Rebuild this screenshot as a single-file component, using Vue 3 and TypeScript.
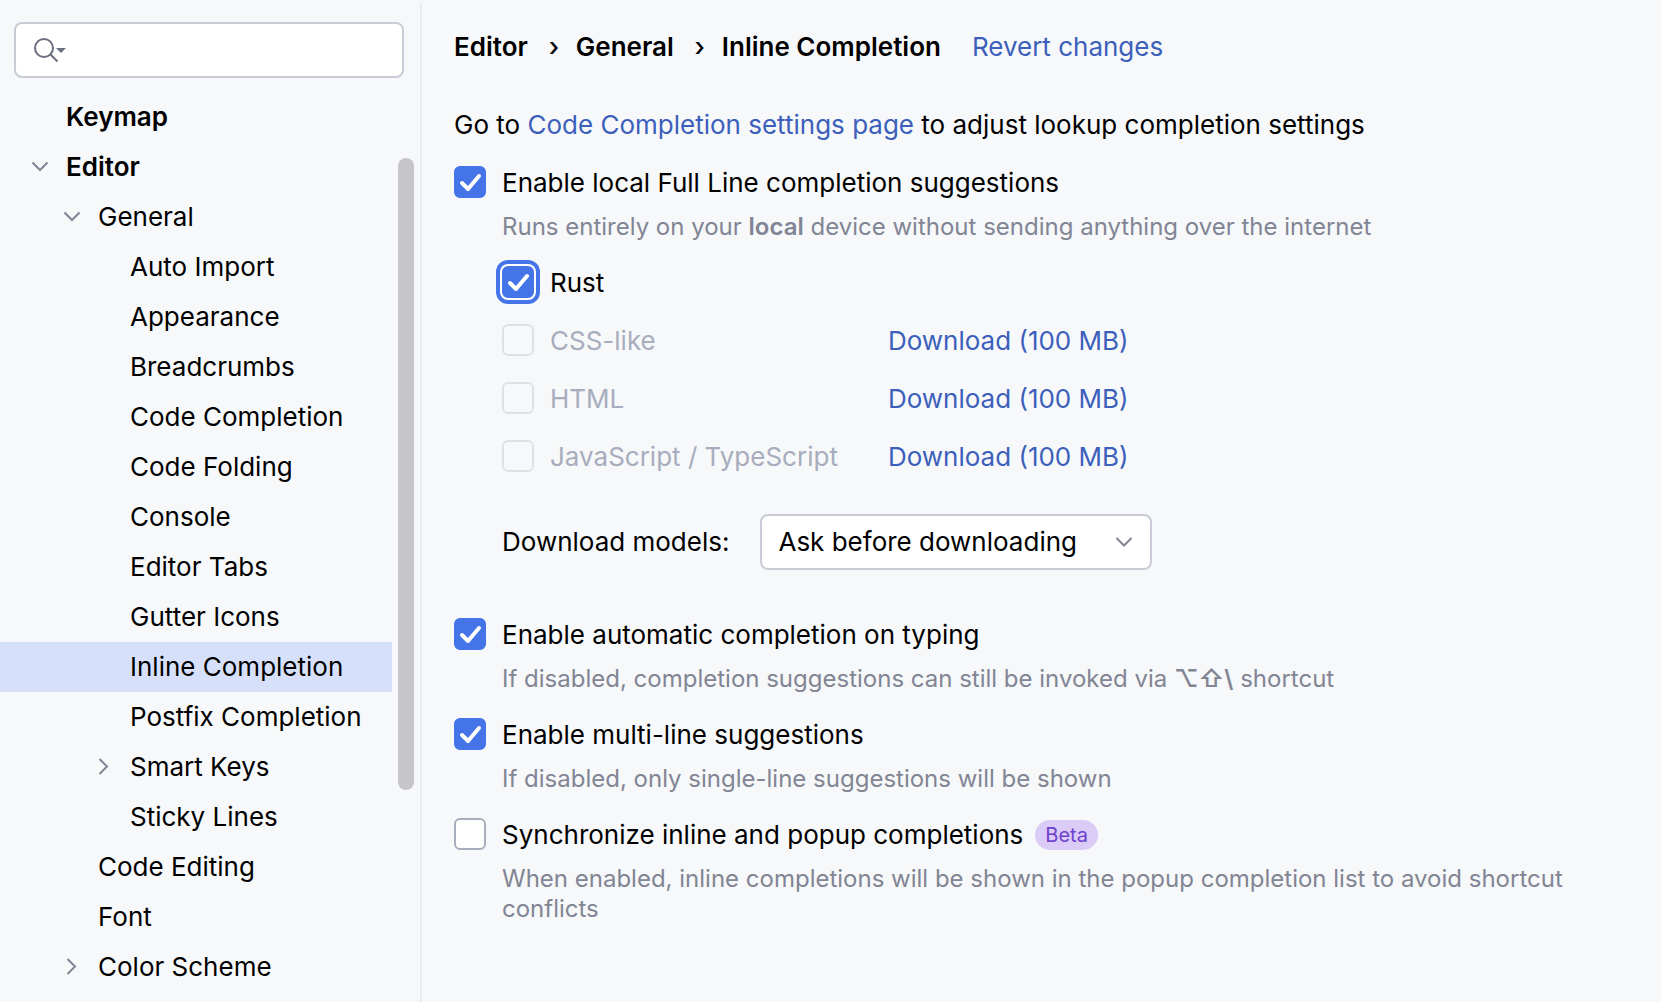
<script setup lang="ts">
import { ref, onMounted } from 'vue'

interface TreeItem {
  label: string
  level: number
  state?: 'open' | 'closed'
  bold?: boolean
}

interface Language {
  id: string
  label: string
  available: boolean
}

const tree: TreeItem[] = [
  { label: 'Keymap', level: 0, bold: true },
  { label: 'Editor', level: 0, state: 'open', bold: true },
  { label: 'General', level: 1, state: 'open' },
  { label: 'Auto Import', level: 2 },
  { label: 'Appearance', level: 2 },
  { label: 'Breadcrumbs', level: 2 },
  { label: 'Code Completion', level: 2 },
  { label: 'Code Folding', level: 2 },
  { label: 'Console', level: 2 },
  { label: 'Editor Tabs', level: 2 },
  { label: 'Gutter Icons', level: 2 },
  { label: 'Inline Completion', level: 2 },
  { label: 'Postfix Completion', level: 2 },
  { label: 'Smart Keys', level: 2, state: 'closed' },
  { label: 'Sticky Lines', level: 2 },
  { label: 'Code Editing', level: 1 },
  { label: 'Font', level: 1 },
  { label: 'Color Scheme', level: 1, state: 'closed' },
]

const languages: Language[] = [
  { id: 'rust', label: 'Rust', available: true },
  { id: 'css', label: 'CSS-like', available: false },
  { id: 'html', label: 'HTML', available: false },
  { id: 'js', label: 'JavaScript / TypeScript', available: false },
]

const selected = ref('Inline Completion')
const query = ref('')
const fullLine = ref(true)
const enabledLanguages = ref<string[]>(['rust'])
const downloadMode = ref('ask')
const automatic = ref(true)
const multiLine = ref(true)
const synchronize = ref(false)
const languageList = ref<HTMLElement | null>(null)

onMounted(() => {
  languageList.value?.querySelector('input')?.focus()
})
</script>

<template>
  <div class="settings">
    <aside class="sidebar">
      <label class="search">
        <svg class="search-icon" width="36" height="28" viewBox="0 0 36 28" aria-hidden="true">
          <circle cx="12" cy="12" r="9" fill="none" stroke="#6c707e" stroke-width="2" />
          <path d="M18.500 18.500 25.500 25.500" fill="none" stroke="#6c707e" stroke-width="2" />
          <path d="M24 12H34L29 17Z" fill="#6c707e" />
        </svg>
        <input v-model="query" type="text" aria-label="Search settings" />
      </label>
      <div class="tree-area">
        <nav class="tree" aria-label="Settings">
          <button
            v-for="item in tree"
            :key="item.label"
            type="button"
            class="tree-item"
            :class="['level-' + item.level, { bold: item.bold, selected: item.label === selected }]"
            @click="selected = item.label"
          >
            <span class="toggle">
              <svg v-if="item.state" width="20" height="20" viewBox="0 0 20 20" aria-hidden="true">
                <path
                  :d="item.state === 'open' ? 'M2.500 5.500 10 13 17.500 5.500' : 'M5.500 2 13 9.500 5.500 17'"
                  fill="none"
                  stroke="#818594"
                  stroke-width="2"
                />
              </svg>
            </span>
            {{ item.label }}
          </button>
        </nav>
        <div class="scrollbar"></div>
      </div>
    </aside>

    <main class="page">
      <header class="breadcrumbs">
        <span>Editor</span>
        <span class="separator">›</span>
        <span>General</span>
        <span class="separator">›</span>
        <span>Inline Completion</span>
        <a href="#revert" class="revert">Revert changes</a>
      </header>

      <p class="intro">
        Go to <a href="#code-completion">Code Completion settings page</a> to adjust lookup completion settings
      </p>

      <section class="option">
        <label class="check-row">
          <span class="check">
            <input v-model="fullLine" type="checkbox" />
            <svg viewBox="0 0 32 32" aria-hidden="true"><path d="M8 17 14 23 25 10" /></svg>
          </span>
          Enable local Full Line completion suggestions
        </label>
        <p class="hint">Runs entirely on your <b>local</b> device without sending anything over the internet</p>
        <div ref="languageList" class="languages">
          <template v-for="lang in languages" :key="lang.id">
            <label class="check-row" :class="{ disabled: !lang.available }">
              <span class="check">
                <input v-model="enabledLanguages" type="checkbox" :value="lang.id" :disabled="!lang.available" />
                <svg viewBox="0 0 32 32" aria-hidden="true"><path d="M8 17 14 23 25 10" /></svg>
              </span>
              {{ lang.label }}
            </label>
            <a v-if="!lang.available" :href="'#download-' + lang.id">Download (100 MB)</a>
            <span v-else></span>
          </template>
        </div>
        <div class="models">
          <label for="download-models">Download models:</label>
          <div class="combo">
            <select id="download-models" v-model="downloadMode">
              <option value="ask">Ask before downloading</option>
              <option value="auto">Download automatically</option>
            </select>
            <svg width="20" height="20" viewBox="0 0 20 20" aria-hidden="true">
              <path d="M2.500 6 10 13.500 17.500 6" fill="none" stroke="#818594" stroke-width="2" />
            </svg>
          </div>
        </div>
      </section>

      <section class="option">
        <label class="check-row">
          <span class="check">
            <input v-model="automatic" type="checkbox" />
            <svg viewBox="0 0 32 32" aria-hidden="true"><path d="M8 17 14 23 25 10" /></svg>
          </span>
          Enable automatic completion on typing
        </label>
        <p class="hint">If disabled, completion suggestions can still be invoked via <b>⌥⇧\</b> shortcut</p>
      </section>

      <section class="option">
        <label class="check-row">
          <span class="check">
            <input v-model="multiLine" type="checkbox" />
            <svg viewBox="0 0 32 32" aria-hidden="true"><path d="M8 17 14 23 25 10" /></svg>
          </span>
          Enable multi-line suggestions
        </label>
        <p class="hint">If disabled, only single-line suggestions will be shown</p>
      </section>

      <section class="option">
        <label class="check-row">
          <span class="check">
            <input v-model="synchronize" type="checkbox" />
            <svg viewBox="0 0 32 32" aria-hidden="true"><path d="M8 17 14 23 25 10" /></svg>
          </span>
          <span class="with-badge">
            Synchronize inline and popup completions
            <span class="badge">Beta</span>
          </span>
        </label>
        <p class="hint">
          When enabled, inline completions will be shown in the popup completion list to avoid shortcut conflicts
        </p>
      </section>
    </main>
  </div>
</template>

<style>
body {
  background: #f7f8fa;
}
</style>

<style scoped>
.settings {
  display: flex;
  min-height: 100vh;
  box-sizing: border-box;
  padding-top: 2px;
  background: #f7f8fa;
  color: #000;
  font: 400 26px/32px Inter, sans-serif;
}

a {
  color: #3c5fbb;
  text-decoration: none;
}

b {
  font-weight: 600;
}

.sidebar {
  flex: none;
  width: 420px;
  border-right: 2px solid #ebecf0;
}

.search {
  display: flex;
  align-items: center;
  box-sizing: border-box;
  height: 56px;
  margin: 20px 16px 14px 14px;
  padding: 0 16px;
  gap: 8px;
  border: 2px solid #c9ccd6;
  border-radius: 8px;
  background: #fff;
}

.search-icon {
  flex: none;
}

.search input {
  flex: 1;
  min-width: 0;
  border: 0;
  outline: 0;
  padding: 0;
  background: transparent;
  color: inherit;
  font: inherit;
}

.tree-area {
  display: flex;
  gap: 6px;
}

.tree {
  flex: none;
  width: 392px;
}

.tree-item {
  display: flex;
  align-items: center;
  width: 100%;
  height: 50px;
  border: 0;
  padding: 0 0 0 30px;
  background: transparent;
  color: inherit;
  font: inherit;
  text-align: left;
  white-space: nowrap;
}

.tree-item.level-1 {
  padding-left: 62px;
}

.tree-item.level-2 {
  padding-left: 94px;
}

.tree-item.bold {
  font-weight: 600;
}

.tree-item.selected {
  background: #d6e0fb;
}

.toggle {
  display: flex;
  width: 36px;
}

.scrollbar {
  width: 16px;
  height: 632px;
  margin-top: 66px;
  border-radius: 8px;
  background: #c6c6c8;
}

.page {
  flex: 1;
  min-width: 0;
  padding: 29px 32px;
}

.breadcrumbs {
  display: flex;
  font-weight: 600;
  white-space: nowrap;
}

.separator {
  box-sizing: border-box;
  width: 48px;
  padding-left: 4px;
  font-weight: 500;
  text-align: center;
}

.revert {
  margin-left: 31px;
  font-weight: 400;
}

.intro {
  margin: 46px 0 25px;
}

.option {
  margin-bottom: 24px;
}

.check-row {
  display: flex;
  align-items: flex-start;
  gap: 16px;
  height: 32px;
  line-height: 34px;
}

.check {
  display: grid;
  flex: none;
  width: 32px;
  height: 32px;
}

.check > * {
  grid-area: 1 / 1;
}

.check input {
  appearance: none;
  box-sizing: border-box;
  width: 32px;
  height: 32px;
  margin: 0;
  border: 2px solid #a8adbd;
  border-radius: 6px;
  background: #fff;
}

.check input:checked {
  border-color: #4573e8;
  background: #4573e8;
}

.check input:focus {
  outline: 0;
  box-shadow: 0 0 0 2px #fff, 0 0 0 6px #4573e8;
}

.check input:disabled {
  border-color: #dfe1e5;
  background: #f7f8fa;
}

.check svg {
  width: 32px;
  height: 32px;
  fill: none;
  stroke: #fff;
  stroke-width: 4;
  stroke-linecap: round;
  stroke-linejoin: round;
  pointer-events: none;
}

.check input:not(:checked) + svg {
  visibility: hidden;
}

.disabled {
  color: #a8adbd;
}

.hint {
  margin: 14px 0 0 48px;
  color: #818594;
  font-size: 24px;
  line-height: 30px;
}

.languages {
  display: grid;
  grid-template-columns: max-content max-content;
  grid-auto-rows: 32px;
  gap: 26px 50px;
  margin: 24px 0 42px 48px;
  line-height: 34px;
}

.models {
  display: flex;
  align-items: center;
  gap: 31px;
  margin: 0 0 48px 48px;
}

.combo {
  display: grid;
  align-items: center;
  width: 392px;
}

.combo > * {
  grid-area: 1 / 1;
}

.combo select {
  appearance: none;
  box-sizing: border-box;
  width: 100%;
  height: 56px;
  border: 2px solid #c9ccd6;
  border-radius: 8px;
  padding: 0 48px 0 16px;
  background: #fff;
  color: inherit;
  font: inherit;
}

.combo svg {
  justify-self: end;
  margin-right: 18px;
  pointer-events: none;
}

.with-badge {
  display: flex;
  align-items: center;
  gap: 12px;
}

.badge {
  height: 30px;
  padding: 0 10px;
  border-radius: 15px;
  background: #dacbf7;
  color: #6f42cf;
  font-size: 20px;
  line-height: 30px;
}
</style>
